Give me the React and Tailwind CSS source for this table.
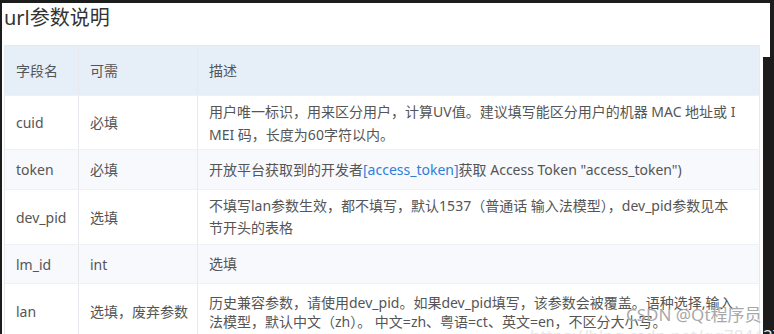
import React from 'react';

const rows = [
  {
    name: 'cuid',
    req: '必填',
    h: 'h-[54px]',
    lh: 'leading-[23px]',
    bg: 'bg-white',
    desc: [
      '用户唯一标识，用来区分用户，计算UV值。建议填写能区分用户的机器 MAC 地址或 I',
      'MEI 码，长度为60字符以内。',
    ],
  },
  {
    name: 'token',
    req: '必填',
    h: 'h-[40px]',
    lh: 'leading-[22px]',
    bg: 'bg-[#f7f9fc]',
    desc: null,
  },
  {
    name: 'dev_pid',
    req: '选填',
    h: 'h-[55px]',
    lh: 'leading-[22px]',
    bg: 'bg-white',
    desc: [
      '不填写lan参数生效，都不填写，默认1537（普通话 输入法模型），dev_pid参数见本',
      '节开头的表格',
    ],
  },
  {
    name: 'lm_id',
    req: 'int',
    h: 'h-[39px]',
    lh: 'leading-[22px]',
    bg: 'bg-[#f7f9fc]',
    desc: ['选填'],
  },
  {
    name: 'lan',
    req: '选填，废弃参数',
    h: 'h-[56px]',
    lh: 'leading-[19px]',
    bg: 'bg-white',
    desc: [
      '历史兼容参数，请使用dev_pid。如果dev_pid填写，该参数会被覆盖。语种选择,输入',
      '法模型，默认中文（zh）。 中文=zh、粤语=ct、英文=en，不区分大小写。',
    ],
  },
];

const Cell = ({ children, className = '' }) => (
  <div className={`flex items-center px-[11px] whitespace-nowrap border-r border-[#e6eaef] ${className}`}>
    {children}
  </div>
);

export default function App() {
  return (
    <div
      className="relative w-[774px] h-[334px] overflow-hidden bg-[#1c1c1c] pt-[3px] pl-[2px]"
      style={{ fontFamily: '"Noto Sans", "Noto Sans CJK SC", sans-serif' }}
    >
      <div className="w-[768px] h-[331px] bg-white">
        <h1 className="pl-[2px] pt-[2px] h-[42px] text-[20px] leading-[26px] text-[#333]">url参数说明</h1>

        {/* parameter table */}
        <div className="ml-[2px] w-[756px] border-l border-t border-[#e6eaef] text-[14px] text-[#555]">
          <div className="grid grid-cols-[74px_119px_562px] h-[49px] bg-[#e6eff8]">
            <Cell>字段名</Cell>
            <Cell>可需</Cell>
            <Cell>描述</Cell>
          </div>
          {rows.map((r) => (
            <div
              key={r.name}
              className={`grid grid-cols-[74px_119px_562px] border-t border-[#eef1f5] ${r.h} ${r.bg}`}
            >
              <Cell>{r.name}</Cell>
              <Cell className="overflow-visible">{r.req}</Cell>
              <Cell className={r.lh}>
                {r.desc ? (
                  <div>
                    {r.desc.map((line) => (
                      <div key={line}>{line}</div>
                    ))}
                  </div>
                ) : (
                  <div>
                    开放平台获取到的开发者<span className="text-[#2f7fd9]">[access_token]</span>获取 Access Token "access_token")
                  </div>
                )}
              </Cell>
            </div>
          ))}
        </div>
      </div>

      {/* right scrollbar strip */}
      <div className="absolute right-0 top-[57px] w-[11px] h-[277px] bg-[#1c1c1c]" />

      {/* watermark */}
      <div className="absolute left-[626px] top-[304px] text-[17px] leading-[22px] text-[#a9a9a9] whitespace-nowrap">
        CSDN @Qt程序员
      </div>
      <div className="absolute left-[530px] top-[325px] text-[17px] leading-[22px] text-[#e8e8e8] whitespace-nowrap">
        https://blog.csdn.net/qq78442761
      </div>
    </div>
  );
}
